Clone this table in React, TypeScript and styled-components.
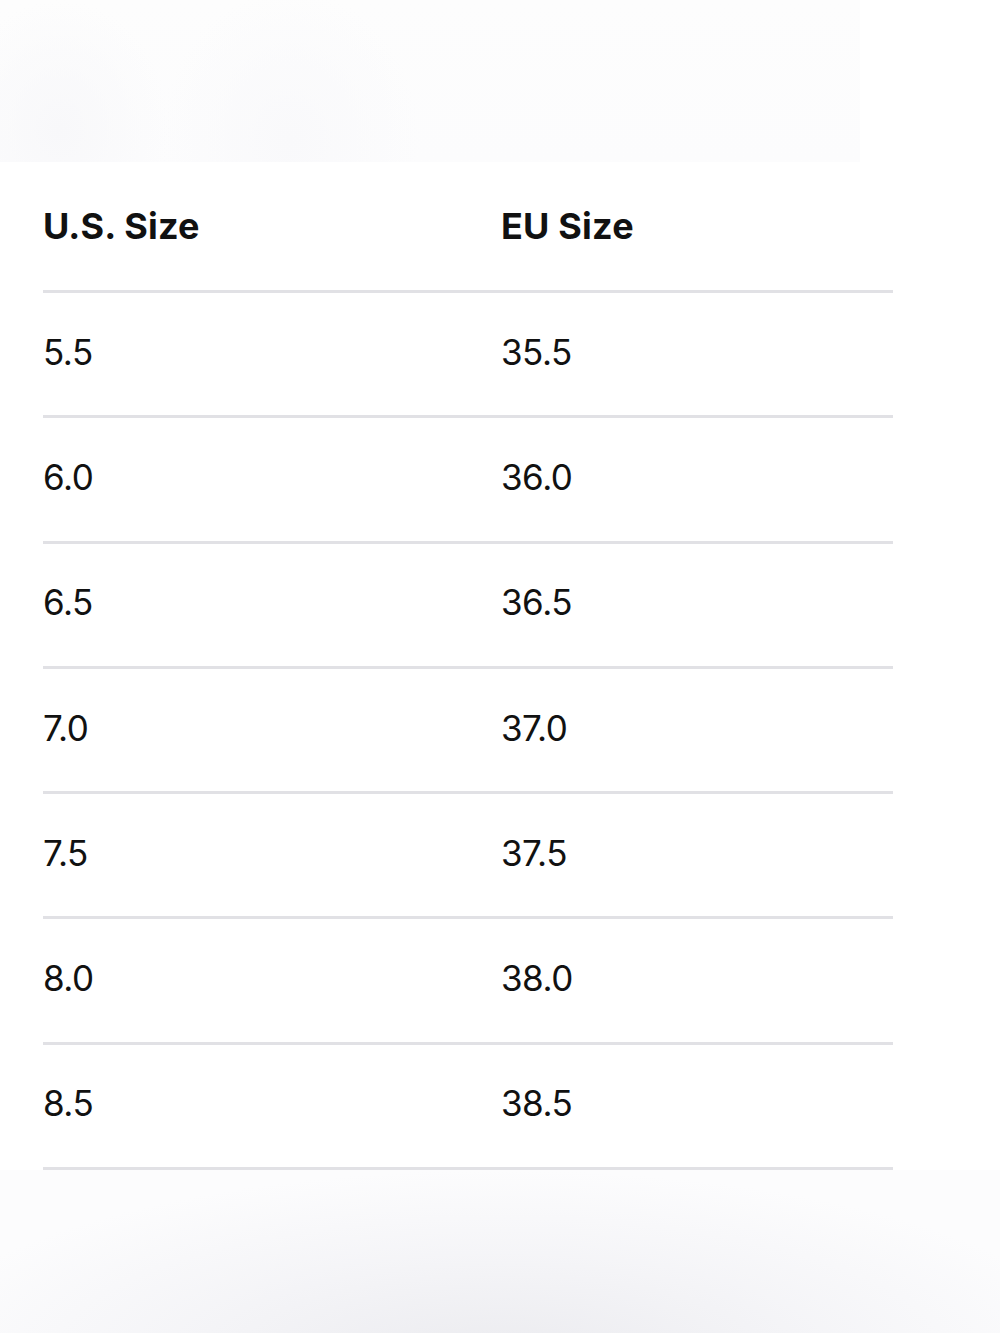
import React from "react";
import styled, { createGlobalStyle } from "styled-components";

const GlobalStyle = createGlobalStyle`
  html, body {
    margin: 0;
    padding: 0;
    background: #ffffff;
  }
  body {
    font-family: Inter, "Noto Sans", "Liberation Sans", sans-serif;
    color: #111111;
    -webkit-font-smoothing: antialiased;
  }
`;

const Page = styled.div`
  width: 1000px;
  height: 1333px;
  display: flex;
  flex-direction: column;
  background: #ffffff;
  overflow: hidden;
`;

const TopBand = styled.div`
  height: 162px;
  flex: none;
  background:
    radial-gradient(ellipse 110px 130px at 60px 130px, #f8f8fa 0%, rgba(248,248,250,0) 100%),
    radial-gradient(ellipse 130px 150px at 290px 140px, #f9f9fb 0%, rgba(249,249,251,0) 100%),
    linear-gradient(#fdfdfd, #fcfcfd);
  clip-path: inset(0 140px 0 0);
`;

const Table = styled.div`
  flex: none;
  margin: 0 107px 0 43px;
  display: flex;
  flex-direction: column;
`;

const Row = styled.div<{ $header?: boolean }>`
  display: grid;
  grid-template-columns: 458px 1fr;
  align-items: center;
  height: ${(p) => (p.$header ? "128px" : "118.3px")};
  padding-bottom: ${(p) => (p.$header ? "0" : "4px")};
  border-bottom: 3px solid #e1e1e5;
  box-sizing: content-box;
`;

const Cell = styled.div<{ $header?: boolean }>`
  font-size: ${(p) => (p.$header ? "36px" : "35px")};
  line-height: 1;
  font-weight: ${(p) => (p.$header ? 700 : 400)};
  letter-spacing: ${(p) => (p.$header ? "0.2px" : "-0.5px")};
  color: #111111;
`;

const BottomBand = styled.div`
  flex: 1;
  background:
    radial-gradient(ellipse 600px 190px at 500px 190px, #ebebef 0%, rgba(240,240,244,0.6) 55%, rgba(252,252,253,0) 100%),
    #fcfcfd;
`;

const rows: [string, string][] = [
  ["5.5", "35.5"],
  ["6.0", "36.0"],
  ["6.5", "36.5"],
  ["7.0", "37.0"],
  ["7.5", "37.5"],
  ["8.0", "38.0"],
  ["8.5", "38.5"],
];

export default function App() {
  return (
    <>
      <GlobalStyle />
      <Page>
        <TopBand />
        <Table>
          <Row $header>
            <Cell $header>U.S. Size</Cell>
            <Cell $header>EU Size</Cell>
          </Row>
          {rows.map(([us, eu]) => (
            <Row key={us}>
              <Cell>{us}</Cell>
              <Cell>{eu}</Cell>
            </Row>
          ))}
        </Table>
        <BottomBand />
      </Page>
    </>
  );
}
